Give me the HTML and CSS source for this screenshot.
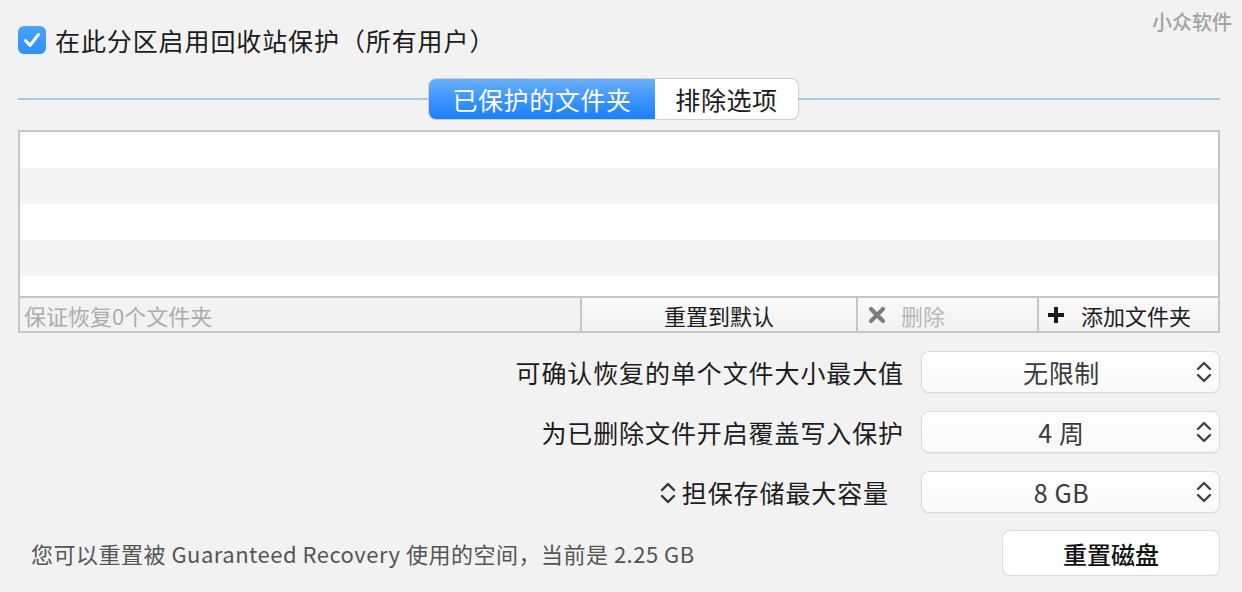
FILE: index.html
```html
<!DOCTYPE html>
<html lang="zh-CN">
<head>
<meta charset="utf-8">
<title>Guaranteed Recovery</title>
<link rel="stylesheet" href="styles.css">
</head>
<body>
<div class="panel">
  <div class="watermark">小众软件</div>

  <label class="enable">
    <span class="checkbox">
      <svg width="28" height="28" viewBox="0 0 28 28"><path d="M7.5 14.5 L12 19.5 L20.5 8.5" fill="none" stroke="#fff" stroke-width="3" stroke-linecap="round" stroke-linejoin="round"/></svg>
    </span>
    <span class="enable-text">在此分区启用回收站保护（所有用户）</span>
  </label>

  <div class="tabs-row">
    <div class="rule rule-left"></div>
    <div class="segmented">
      <div class="seg seg-active">已保护的文件夹</div>
      <div class="seg">排除选项</div>
    </div>
    <div class="rule rule-right"></div>
  </div>

  <div class="list">
    <div class="rows">
      <div class="row"></div>
      <div class="row alt"></div>
      <div class="row"></div>
      <div class="row alt"></div>
      <div class="row last"></div>
    </div>
    <div class="list-footer">
      <div class="footer-label">保证恢复0个文件夹</div>
      <div class="footer-btn">重置到默认</div>
      <div class="footer-btn disabled">
        <svg class="ico" width="18" height="18" viewBox="0 0 18 18"><path d="M3 3 L15 15 M15 3 L3 15" stroke="#7d7d7d" stroke-width="4.2" stroke-linecap="round"/></svg>
        <span>删除</span>
      </div>
      <div class="footer-btn">
        <svg class="ico" width="18" height="18" viewBox="0 0 18 18"><path d="M9 1 V17 M1 9 H17" stroke="#1a1a1a" stroke-width="4"/></svg>
        <span>添加文件夹</span>
      </div>
    </div>
  </div>

  <div class="settings">
    <div class="set-label">可确认恢复的单个文件大小最大值</div>
    <div class="popup">
      <span class="popup-value">无限制</span>
      <svg class="chev" width="16" height="26" viewBox="0 0 16 26"><path d="M2 10 L8 4 L14 10 M2 16 L8 22 L14 16" fill="none" stroke="#444" stroke-width="2.4" stroke-linecap="round" stroke-linejoin="round"/></svg>
    </div>

    <div class="set-label">为已删除文件开启覆盖写入保护</div>
    <div class="popup">
      <span class="popup-value">4 周</span>
      <svg class="chev" width="16" height="26" viewBox="0 0 16 26"><path d="M2 10 L8 4 L14 10 M2 16 L8 22 L14 16" fill="none" stroke="#444" stroke-width="2.4" stroke-linecap="round" stroke-linejoin="round"/></svg>
    </div>

    <div class="set-label set-label-narrow">
      <svg class="label-chev" width="16" height="28" viewBox="0 0 16 28"><path d="M2 11 L8 5 L14 11 M2 17 L8 23 L14 17" fill="none" stroke="#333" stroke-width="2.4" stroke-linecap="round" stroke-linejoin="round"/></svg>
      <span>担保存储最大容量</span>
    </div>
    <div class="popup">
      <span class="popup-value">8 GB</span>
      <svg class="chev" width="16" height="26" viewBox="0 0 16 26"><path d="M2 10 L8 4 L14 10 M2 16 L8 22 L14 16" fill="none" stroke="#444" stroke-width="2.4" stroke-linecap="round" stroke-linejoin="round"/></svg>
    </div>
  </div>

  <div class="bottom">
    <div class="bottom-text">您可以重置被 Guaranteed Recovery 使用的空间，当前是 2.25 GB</div>
    <div class="reset-btn">重置磁盘</div>
  </div>
</div>
</body>
</html>
```

FILE: styles.css
```css
* { box-sizing: border-box; }

html, body {
  margin: 0;
  padding: 0;
  background: #f2f2f2;
}

body {
  font-family: "Noto Sans CJK SC", "Noto Sans", sans-serif;
  color: #1e1e1e;
  width: 1242px;
  height: 592px;
  overflow: hidden;
}

.panel {
  position: relative;
  padding: 26px 22px 0 18px;
}

.watermark {
  position: absolute;
  top: 9px;
  right: 10px;
  font-size: 20px;
  font-weight: 500;
  color: #a3a3a3;
  line-height: 26px;
}

.enable {
  display: flex;
  align-items: center;
  height: 28px;
}

.checkbox {
  width: 28px;
  height: 28px;
  border-radius: 6px;
  background: linear-gradient(#4aa3fd, #2f8ffb);
  display: flex;
  flex: none;
}

.enable-text {
  margin-left: 9px;
  font-size: 25px;
  letter-spacing: 0.9px;
  line-height: 28px;
  color: #1c1c1c;
}

.tabs-row {
  display: flex;
  align-items: center;
  margin-top: 25px;
  height: 40px;
}

.rule {
  height: 2px;
  background: #a2cde6;
}
.rule-left { flex: 411 1 0; }
.rule-right { flex: 422 1 0; }

.segmented {
  display: flex;
  height: 40px;
  border-radius: 7px;
  box-shadow: 0 0 0 1px #cfcfcf, 0 1px 1px rgba(0,0,0,0.15);
  overflow: hidden;
  background: #fff;
}

.seg {
  display: flex;
  align-items: center;
  justify-content: center;
  font-size: 25px;
  letter-spacing: 0.6px;
  color: #1c1c1c;
  width: 143px;
}

.seg-active {
  width: 226px;
  color: #fff;
  background: linear-gradient(#69b1fb, #3d95fb 50%, #1a7ff9);
}

.list {
  margin-top: 11px;
  border: 2px solid #c6c6c6;
  background: #fff;
}

.rows {
  display: flex;
  flex-direction: column;
}

.row { height: 36px; background: #fff; }
.row.alt { background: #f4f4f4; }
.row.last { height: 20px; }

.list-footer {
  display: grid;
  grid-template-columns: 560px 276px 181px 1fr;
  height: 35px;
  border-top: 2px solid #c6c6c6;
  background: #f2f2f2;
}

.footer-label {
  display: flex;
  align-items: center;
  padding-left: 4px;
  font-size: 22px;
  color: #acacac;
}

.footer-btn {
  display: flex;
  align-items: center;
  justify-content: center;
  gap: 15px;
  border-left: 2px solid #c6c6c6;
  background: linear-gradient(#f9f9f9, #f2f2f2);
  font-size: 22px;
  color: #1c1c1c;
}

.footer-btn.disabled {
  justify-content: flex-start;
  padding-left: 10px;
  color: #b8b8b8;
}

.footer-btn:last-child {
  justify-content: flex-start;
  padding-left: 8px;
  gap: 16px;
}

.ico { flex: none; }

.settings {
  display: grid;
  grid-template-columns: 1fr 298px;
  column-gap: 18px;
  row-gap: 20px;
  margin-top: 19px;
}

.set-label {
  display: flex;
  align-items: center;
  justify-content: flex-end;
  height: 40px;
  font-size: 25px;
  letter-spacing: 0.9px;
  color: #1c1c1c;
}

.set-label-narrow {
  padding-right: 15px;
  gap: 6px;
}

.label-chev { margin-top: 2px; }

.popup {
  position: relative;
  display: flex;
  align-items: center;
  justify-content: center;
  height: 40px;
  margin-right: 1px;
  border-radius: 7px;
  background: linear-gradient(#ffffff, #f9f9f9);
  box-shadow: 0 0 0 1px #dadada, 0 1px 2px rgba(0,0,0,0.12);
}

.popup-value {
  font-size: 25px;
  letter-spacing: 0.6px;
  color: #3a3a3a;
  margin-right: 18px;
}

.chev {
  position: absolute;
  right: 7px;
  top: 7px;
}

.bottom {
  display: flex;
  align-items: center;
  justify-content: space-between;
  margin-top: 19px;
}

.bottom-text {
  padding-left: 13px;
  font-size: 22px;
  letter-spacing: 0.5px;
  color: #555;
}

.reset-btn {
  width: 216px;
  height: 44px;
  margin-right: 1px;
  display: flex;
  align-items: center;
  justify-content: center;
  border-radius: 7px;
  background: #fff;
  box-shadow: 0 0 0 1px #dcdcdc, 0 1px 1px rgba(0,0,0,0.1);
  font-size: 24px;
  font-weight: 500;
  color: #111;
}
```
